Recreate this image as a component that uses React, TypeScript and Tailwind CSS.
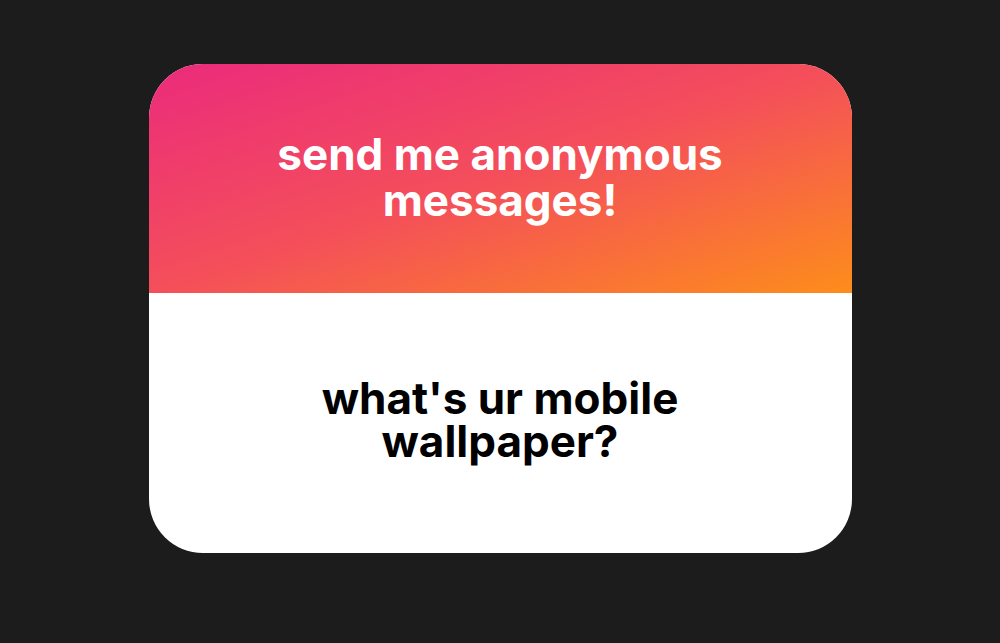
export default function App() {
  return (
    <div className="w-[1000px] h-[643px] bg-[#1c1c1c] flex items-start justify-center pt-[64px]" style={{ fontFamily: 'Inter, "Noto Sans", sans-serif' }}>
      <div className="w-[703px] h-[489px] rounded-[54px] overflow-hidden flex flex-col bg-white">
        <div className="h-[229px] bg-[linear-gradient(to_bottom_right,#eb2b7c_0%,#f44f5a_50%,#fd8d1b_100%)] flex items-center justify-center pb-[4px]">
          <div className="text-white font-bold text-[44px] leading-[46px] text-center">
            send me anonymous<br />messages!
          </div>
        </div>
        <div className="flex-1 flex items-center justify-center pb-[6px]">
          <div className="text-black font-bold text-[44px] leading-[43px] text-center">
            what's ur mobile<br />wallpaper?
          </div>
        </div>
      </div>
    </div>
  );
}
